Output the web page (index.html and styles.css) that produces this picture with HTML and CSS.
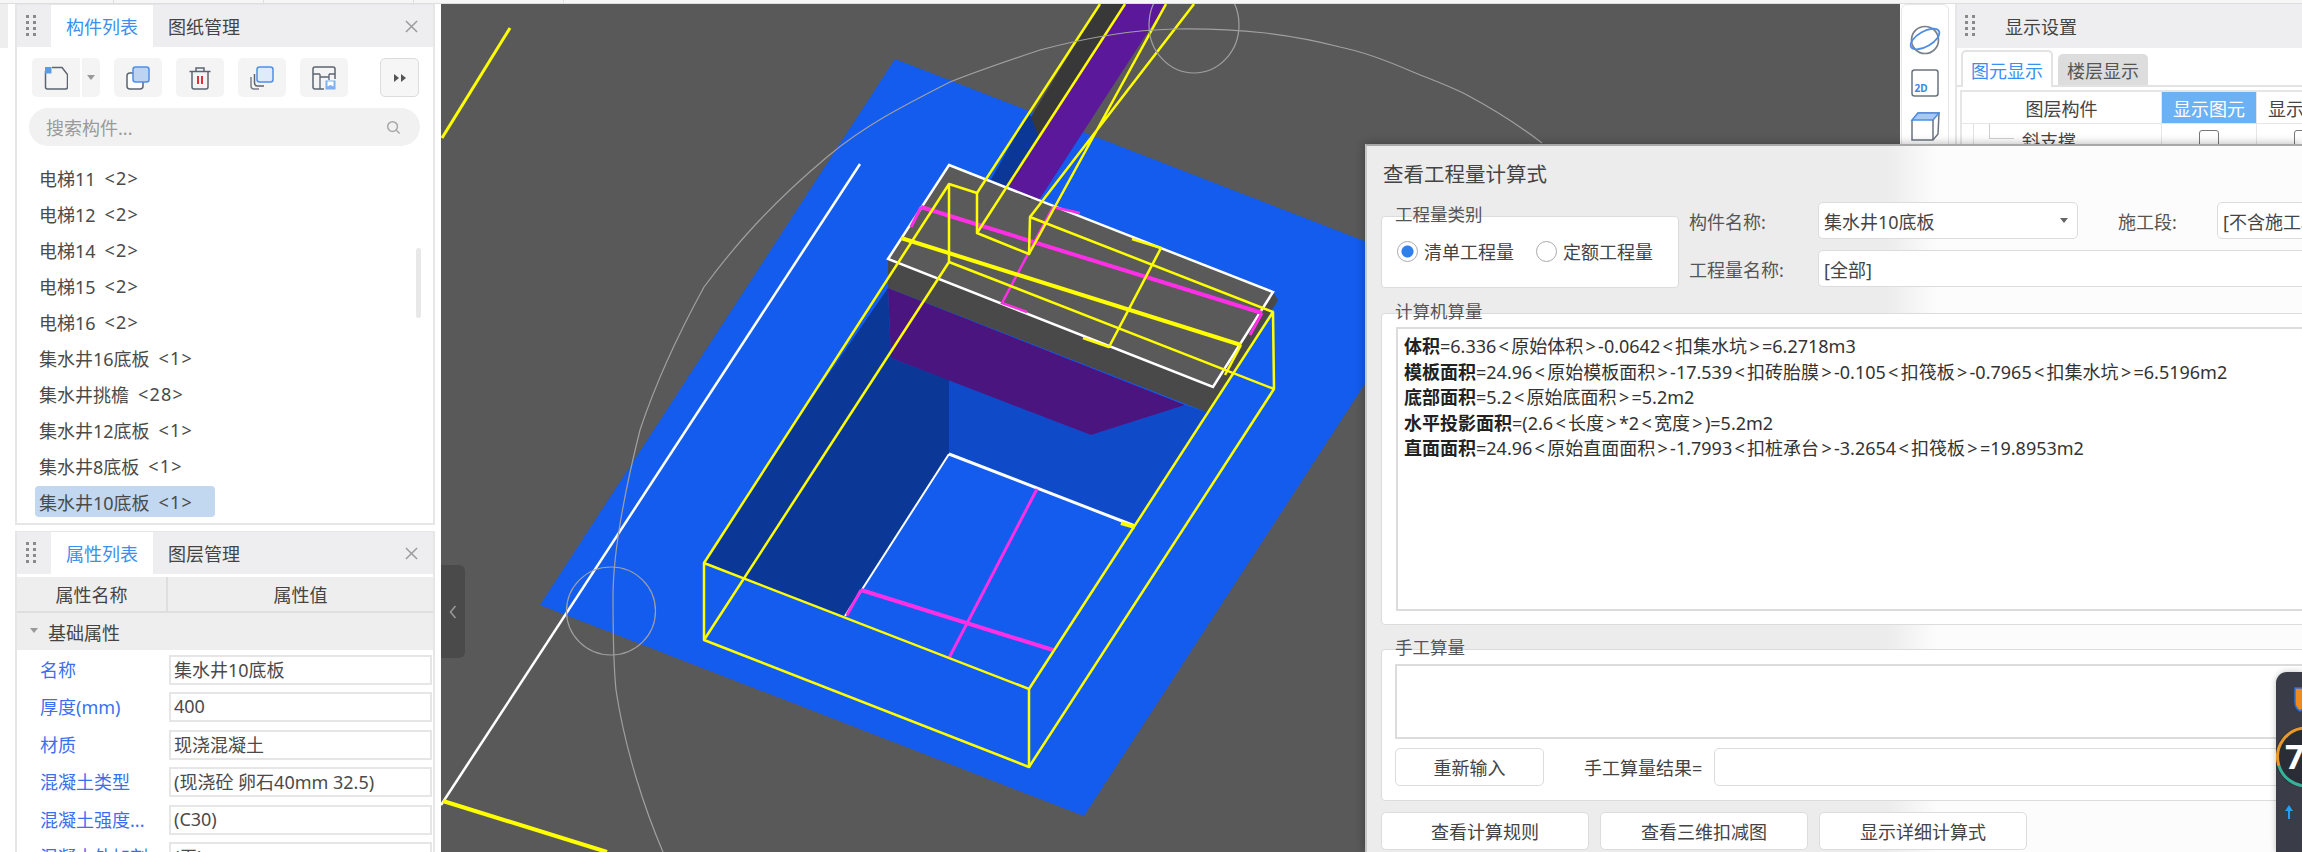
FILE: index.html
```html
<!DOCTYPE html>
<html lang="zh">
<head>
<meta charset="utf-8">
<title>查看工程量计算式</title>
<link rel="stylesheet" href="styles.css">
</head>
<body>
<div class="app">
  <div class="topstrip"><span></span><span></span><span></span><span></span></div>
  <div class="main">
    <div class="rail"><div class="rail-block"></div></div>
    <aside class="side">
      <section class="panel panel-list">
        <header class="phead">
          <svg class="grip" viewBox="0 0 10 22"><g fill="#8a8a8a"><rect x="0" y="0" width="3" height="3"/><rect x="7" y="0" width="3" height="3"/><rect x="0" y="6" width="3" height="3"/><rect x="7" y="6" width="3" height="3"/><rect x="0" y="12" width="3" height="3"/><rect x="7" y="12" width="3" height="3"/><rect x="0" y="18" width="3" height="3"/><rect x="7" y="18" width="3" height="3"/></g></svg>
          <div class="tab tab-on">构件列表</div>
          <div class="tab">图纸管理</div>
          <svg class="close" viewBox="0 0 14 14"><path d="M1 1l12 12M13 1L1 13" stroke="#9a9a9a" stroke-width="1.6" fill="none"/></svg>
        </header>
        <div class="tools">
          <div class="tbtn tbtn-new">
            <svg viewBox="0 0 24 24" class="ic"><path d="M1.500 5V21a2 2 0 0 0 2 2H21.500a2 2 0 0 0 2-2V8.500L18 1.500H8" fill="none" stroke="#5c6470" stroke-width="1.500"/><rect x="1" y="1" width="6.500" height="6.500" fill="#5a9bec"/></svg>
          </div>
          <div class="tbtn tbtn-arrow"><i class="caret"></i></div>
          <div class="tbtn">
            <svg viewBox="0 0 24 24" class="ic"><rect x="1" y="7" width="16" height="16" rx="3" fill="#fff" stroke="#5c6470" stroke-width="1.500"/><rect x="7" y="1" width="16" height="15" rx="2.500" fill="#bcd3f2" stroke="#4f8fe6" stroke-width="1.500"/></svg>
          </div>
          <div class="tbtn">
            <svg viewBox="0 0 24 24" class="ic"><path d="M4 6V21a2 2 0 0 0 2 2H18a2 2 0 0 0 2-2V6" fill="none" stroke="#5c6470" stroke-width="1.500"/><path d="M1.500 5.500H22.500M8 5V2h8v3" fill="none" stroke="#5c6470" stroke-width="1.500"/><path d="M10 10v8M14 10v8" stroke="#e0303a" stroke-width="2"/></svg>
          </div>
          <div class="tbtn">
            <svg viewBox="0 0 24 24" class="ic"><path d="M1 11V20a3 3 0 0 0 3 3H9" fill="none" stroke="#7a8088" stroke-width="1.500"/><path d="M4.500 8V17a3 3 0 0 0 3 3H14" fill="none" stroke="#5c6470" stroke-width="1.500"/><rect x="7" y="1" width="16" height="15" rx="2.500" fill="#dfeafa" stroke="#4f8fe6" stroke-width="1.500"/></svg>
          </div>
          <div class="tbtn">
            <svg viewBox="0 0 24 24" class="ic"><path d="M12 23H3a2 2 0 0 1-2-2V3a2 2 0 0 1 2-2H21a2 2 0 0 1 2 2V13" fill="none" stroke="#5c6470" stroke-width="1.500"/><path d="M1 8H8M8 8V14M8 11H17M17 8V14M17 8H23M8 14V23" fill="none" stroke="#5c6470" stroke-width="1.300"/><rect x="13.500" y="14.500" width="10" height="9" fill="#7fb0ee"/><path d="M15.500 15.500h6v5l-3-1.500-3 1.500z" fill="#fff"/></svg>
          </div>
          <div class="tbtn tbtn-more">
            <svg viewBox="0 0 12 8" class="ic-more"><path d="M0 0l5 4-5 4zM7 0l5 4-5 4z" fill="#555"/></svg>
          </div>
        </div>
        <div class="search">
          <span>搜索构件...</span>
          <svg viewBox="0 0 16 16" class="ic-search"><circle cx="7" cy="7" r="5.200" fill="none" stroke="#a8a8a8" stroke-width="1.600"/><path d="M11 11l3.500 3.500" stroke="#a8a8a8" stroke-width="1.600"/></svg>
        </div>
        <ul class="items">
          <li>电梯11<span class="n">&lt;2&gt;</span></li>
          <li>电梯12<span class="n">&lt;2&gt;</span></li>
          <li>电梯14<span class="n">&lt;2&gt;</span></li>
          <li>电梯15<span class="n">&lt;2&gt;</span></li>
          <li>电梯16<span class="n">&lt;2&gt;</span></li>
          <li>集水井16底板<span class="n">&lt;1&gt;</span></li>
          <li>集水井挑檐<span class="n">&lt;28&gt;</span></li>
          <li>集水井12底板<span class="n">&lt;1&gt;</span></li>
          <li>集水井8底板<span class="n">&lt;1&gt;</span></li>
          <li class="sel">集水井10底板<span class="n">&lt;1&gt;</span></li>
        </ul>
        <div class="sbar"></div>
      </section>
      <section class="panel panel-props">
        <header class="phead">
          <svg class="grip" viewBox="0 0 10 22"><g fill="#8a8a8a"><rect x="0" y="0" width="3" height="3"/><rect x="7" y="0" width="3" height="3"/><rect x="0" y="6" width="3" height="3"/><rect x="7" y="6" width="3" height="3"/><rect x="0" y="12" width="3" height="3"/><rect x="7" y="12" width="3" height="3"/><rect x="0" y="18" width="3" height="3"/><rect x="7" y="18" width="3" height="3"/></g></svg>
          <div class="tab tab-on">属性列表</div>
          <div class="tab">图层管理</div>
          <svg class="close" viewBox="0 0 14 14"><path d="M1 1l12 12M13 1L1 13" stroke="#9a9a9a" stroke-width="1.6" fill="none"/></svg>
        </header>
        <div class="thead"><div>属性名称</div><div>属性值</div></div>
        <div class="tgroup"><i class="caret caret-sm"></i>基础属性</div>
        <div class="prow"><label>名称</label><div class="pval">集水井10底板</div></div>
        <div class="prow"><label>厚度(mm)</label><div class="pval">400</div></div>
        <div class="prow"><label>材质</label><div class="pval">现浇混凝土</div></div>
        <div class="prow"><label>混凝土类型</label><div class="pval">(现浇砼 卵石40mm 32.5)</div></div>
        <div class="prow"><label>混凝土强度...</label><div class="pval">(C30)</div></div>
        <div class="prow"><label>混凝土外加剂</label><div class="pval">(无)</div></div>
      </section>
    </aside>

    <div class="canvas">
      <svg class="scene" viewBox="441 4 1459 848" preserveAspectRatio="none">
        <polygon points="895,59 1439,270 1084,816 540,605" fill="#135cee"/>
        <polygon points="888,288 891,358 949,380 949,454 845,616 704,563 790,430" fill="#0b3896"/>
        <polygon points="949,380 1091,435 1185,405 1209,413 1135,526 949,454" fill="#0f4bc9"/>
        <polygon points="888,288 1185,405 1091,435 891,358" fill="#4b1580"/>
        <polygon points="888,259 1213,387 1273,292 1278,300 1209,413 888,288" fill="#494949"/>
        <polygon points="949,165 1273,292 1213,387 888,259" fill="#5a5a5a"/>
        <polygon points="1100,4 1125,4 1030,200 1006,183 1029,120" fill="#383838"/>
        <polygon points="1029,112 1040,140 1006,187 989,183" fill="#0b3896"/>
        <polygon points="1125,4 1166,4 1039,200 1009,187" fill="#5b189a"/>

        <g fill="none" stroke="#ffffff">
          <path d="M860 164L441 805" stroke-width="2.500"/>
          <path d="M949 165L1273 292L1213 387L888 259Z" stroke-width="2.500"/>
          <path d="M949 454L1135 526" stroke-width="3"/>
          <path d="M949 454L845 616" stroke-width="2"/>
        </g>
        <g fill="none" stroke="#ff2fe6">
          <path d="M921 207L1262 313" stroke-width="4"/>
          <path d="M921 207L911 227M1262 313L1250 335" stroke-width="3"/>
          <path d="M1053 207L1002 303L1027 312M1053 207L1080 213" stroke-width="2.500"/>
          <path d="M861 590L1053 650" stroke-width="4"/>
          <path d="M861 590L847 615" stroke-width="3"/>
          <path d="M1037 489L949 658" stroke-width="3"/>
        </g>
        <g fill="none" stroke="#ffff00" stroke-width="2.500" stroke-linejoin="round">
          <path d="M510 28L442 138" stroke-width="3"/>
          <path d="M443 801L607 852" stroke-width="4"/>
          <path d="M704 563L1029 689L1029 767L704 640Z"/>
          <path d="M704 563L949 184L949 262L704 640"/>
          <path d="M1029 689L1273 312L1274 389L1029 767"/>
          <path d="M949 184L977 193L977 233L1029 254L1030 217L1273 312"/>
          <path d="M949 262L1274 389"/>
          <path d="M977 193L1100 4M977 233L1125 4M1029 254L1166 4M1030 217L1194 4"/>
          <path d="M901 238L1241 345" stroke-width="4"/>
          <path d="M1132 239L1161 248L1109 347L1083 338"/>
          <path d="M1241 345L1225 375"/>
          <path d="M1121 523L1135 527" stroke-width="4"/>
        </g>
        <g fill="none" stroke="#a0a0a0" stroke-width="1.200">
          <path d="M1542 143C1520 126 1495 110 1467 95C1450 86 1430 79 1413 72C1390 62 1365 52 1340 47C1290 34 1240 28 1174 29C1130 30 1085 38 1040 50C1010 60 980 70 950 82C905 105 865 125 827 157C770 205 735 245 704 287C675 340 655 385 640 430C625 490 613 550 613 597C613 630 613 660 616 690C625 750 645 810 663 852"/>
          <ellipse cx="1194" cy="25" rx="45" ry="48"/>
          <ellipse cx="611" cy="611" rx="44.500" ry="44"/>
        </g>
      </svg>
      <div class="handle">
        <svg viewBox="0 0 8 14" class="handle-ic"><path d="M6.500 1L1.500 7l5 6" fill="none" stroke="#9a9a9a" stroke-width="1.500"/></svg>
      </div>
    </div>

    <div class="vtools">
      <svg viewBox="0 0 32 32" class="vic"><circle cx="16" cy="16" r="13.500" fill="none" stroke="#7a8088" stroke-width="1.700"/><ellipse cx="16" cy="15" rx="16" ry="7.500" transform="rotate(-30 16 15)" fill="none" stroke="#4d8ee6" stroke-width="1.800"/></svg>
      <svg viewBox="0 0 28 28" class="vic vic-2d"><rect x="1" y="1" width="26" height="26" rx="2.500" fill="#fff" stroke="#6b7480" stroke-width="1.500"/><text x="3.500" y="23" class="t2d">2D</text></svg>
      <svg viewBox="0 0 30 30" class="vic vic-cube"><path d="M2 10L8 2H29L28 23L23 29H2Z" fill="#fff" stroke="#6b7480" stroke-width="1.500"/><path d="M2 9H23L29 2H8Z" fill="#a9c8f3" stroke="#4d8ee6" stroke-width="1.500"/><path d="M23 9V29" stroke="#6b7480" stroke-width="1.500"/></svg>
    </div>

    <aside class="rpanel">
      <header class="phead rhead">
        <svg class="grip" viewBox="0 0 10 22"><g fill="#8a8a8a"><rect x="0" y="0" width="3" height="3"/><rect x="7" y="0" width="3" height="3"/><rect x="0" y="6" width="3" height="3"/><rect x="7" y="6" width="3" height="3"/><rect x="0" y="12" width="3" height="3"/><rect x="7" y="12" width="3" height="3"/><rect x="0" y="18" width="3" height="3"/><rect x="7" y="18" width="3" height="3"/></g></svg>
        <div class="rtitle">显示设置</div>
      </header>
      <div class="rtabs">
        <div class="rtab rtab-on">图元显示</div>
        <div class="rtab">楼层显示</div>
      </div>
      <div class="rtable">
        <div class="rcell rc-1">图层构件</div>
        <div class="rcell rc-2 rc-hi">显示图元</div>
        <div class="rcell rc-3">显示名称</div>
        <div class="rcell rc-1 rc-tree"><i class="tree-a"></i><i class="tree-b"></i>斜支撑</div>
        <div class="rcell rc-2"><i class="cb"></i></div>
        <div class="rcell rc-3"><i class="cb"></i></div>
      </div>
    </aside>
  </div>
</div>

<div class="dialog">
  <div class="dlg-inner">
    <div class="dlg-title">查看工程量计算式</div>
    <div class="dlg-top">
      <div class="group g-kind">
        <div class="legend">工程量类别</div>
        <div class="radios">
          <span class="radio radio-on"></span><span class="rlabel">清单工程量</span>
          <span class="radio"></span><span class="rlabel">定额工程量</span>
        </div>
      </div>
      <div class="form">
        <div class="flabel">构件名称:</div>
        <div class="field">集水井10底板<i class="caret caret-dark"></i></div>
        <div class="flabel flabel-2">施工段:</div>
        <div class="field">[不含施工段]</div>
        <div class="flabel">工程量名称:</div>
        <div class="field field-wide">[全部]</div>
      </div>
    </div>
    <div class="group g-calc">
      <div class="legend">计算机算量</div>
      <div class="calc">
        <div><b>体积</b>=6.336<s>&lt;</s>原始体积<s>&gt;</s>-0.0642<s>&lt;</s>扣集水坑<s>&gt;</s>=6.2718m3</div>
        <div><b>模板面积</b>=24.96<s>&lt;</s>原始模板面积<s>&gt;</s>-17.539<s>&lt;</s>扣砖胎膜<s>&gt;</s>-0.105<s>&lt;</s>扣筏板<s>&gt;</s>-0.7965<s>&lt;</s>扣集水坑<s>&gt;</s>=6.5196m2</div>
        <div><b>底部面积</b>=5.2<s>&lt;</s>原始底面积<s>&gt;</s>=5.2m2</div>
        <div><b>水平投影面积</b>=(2.6<s>&lt;</s>长度<s>&gt;</s>*2<s>&lt;</s>宽度<s>&gt;</s>)=5.2m2</div>
        <div><b>直面面积</b>=24.96<s>&lt;</s>原始直面面积<s>&gt;</s>-1.7993<s>&lt;</s>扣桩承台<s>&gt;</s>-3.2654<s>&lt;</s>扣筏板<s>&gt;</s>=19.8953m2</div>
      </div>
    </div>
    <div class="group g-manual">
      <div class="legend">手工算量</div>
      <div class="manual-box"></div>
      <div class="manual-row">
        <div class="btn btn-re">重新输入</div>
        <div class="mlabel">手工算量结果=</div>
        <div class="minput"></div>
      </div>
    </div>
    <div class="dlg-btns">
      <div class="btn">查看计算规则</div>
      <div class="btn">查看三维扣减图</div>
      <div class="btn">显示详细计算式</div>
    </div>
  </div>
</div>

<div class="widget">
  <svg viewBox="0 0 26 180" class="widget-svg">
    <path d="M19 16H30V30Q30 36 24 39Q19 36 19 30Z" fill="#f08a1d" stroke="#2f6fe0" stroke-width="1.500"/>
    <circle cx="30" cy="85" r="31" fill="#2b2d36"/>
    <path d="M30 56A29 29 0 0 0 3 94" fill="none" stroke="#e79a2a" stroke-width="3"/>
    <path d="M3 94A29 29 0 0 0 30 114" fill="none" stroke="#35b39a" stroke-width="3"/>
    <text x="9" y="97" class="w7">7</text>
    <path d="M13 133l-4 6h3v8h2v-8h3z" fill="#1fa0ff"/>
  </svg>
</div>
</body>
</html>
```

FILE: styles.css
```css
* { box-sizing: border-box; }
html, body { margin: 0; padding: 0; width: 2302px; height: 852px; overflow: hidden; background: #fff; }
body { font-family: "Noto Sans", "Noto Sans CJK SC", sans-serif; font-size: 18px; color: #444; position: relative; }
.app { display: flex; flex-direction: column; width: 2302px; height: 852px; }
.topstrip { height: 4px; display: flex; background: #f6f6f6; border-bottom: 1px solid #dedede; flex: none; }
.topstrip span { width: 150px; border-right: 1px solid #dedede; }
.topstrip span:first-child { width: 114px; }
.main { flex: 1; display: flex; min-height: 0; }

.rail { width: 8px; flex: none; }
.rail-block { height: 44px; background: #eeeeee; }
.side { width: 420px; margin-left: 7px; margin-right: 6px; flex: none; display: flex; flex-direction: column; gap: 6px; }
.panel { border: 2px solid #e6e6e6; border-top-width: 1px; background: #fff; position: relative; overflow: hidden; }
.panel-list { height: 521px; }
.panel-props { flex: 1; border-bottom: 0; }
.phead { height: 42px; background: #eeeef0; display: flex; align-items: stretch; position: relative; }
.grip { width: 10px; height: 22px; margin: 10px 15px 0 9px; flex: none; }
.tab { width: 102px; display: flex; align-items: center; justify-content: center; color: #444; }
.tab-on { background: #fff; color: #3a8ff0; }
.close { position: absolute; right: 15px; top: 15px; width: 13px; height: 13px; }

.tools { display: flex; padding: 11px 0 0 15px; height: 50px; }
.tbtn { width: 48px; height: 39px; background: #f4f4f4; border-radius: 5px; margin-right: 14px; display: flex; align-items: center; justify-content: center; flex: none; }
.tbtn-new { width: 48px; margin-right: 2px; border-radius: 5px 0 0 5px; }
.tbtn-arrow { width: 18px; border-radius: 0 5px 5px 0; }
.tbtn-more { width: 39px; margin: 0 0 0 18px; background: #f6f6f6; border: 1.500px solid #dcdcdc; }
.ic { width: 24px; height: 24px; }
.ic-more { width: 12px; height: 8px; }
.caret { display: block; width: 0; height: 0; border-left: 4.500px solid transparent; border-right: 4.500px solid transparent; border-top: 5px solid #999; }
.search { margin: 11px 0 0 12px; width: 391px; height: 38px; border-radius: 19px; background: #f1f1f1; display: flex; align-items: center; justify-content: space-between; padding: 0 19px 0 17px; color: #9a9a9a; font-size: 18px; }
.ic-search { width: 15px; height: 15px; }
.items { list-style: none; margin: 14px 0 0 18px; padding: 0; width: 180px; }
.items li { height: 36px; display: flex; align-items: center; padding-left: 4px; white-space: nowrap; font-size: 18px; color: #4a4a4a; }
.items li.sel { height: 31px; margin-top: 2px; background: #c1d8f0; border-radius: 4px; }
.n { margin-left: 9px; letter-spacing: 1.200px; }
.sbar { position: absolute; left: 399px; top: 243px; width: 5px; height: 70px; background: #e8e8e8; border-radius: 3px; }

.thead { margin-top: 3px; height: 36px; background: #eeeeee; display: grid; grid-template-columns: 151px 1fr; border-bottom: 2px solid #dedede; }
.thead div { display: flex; align-items: center; justify-content: center; }
.thead div:first-child { border-right: 2px solid #dedede; }
.tgroup { height: 37px; background: #eeeeee; display: flex; align-items: center; padding-left: 13px; gap: 10px; }
.caret-sm { margin-top: -2px; }
.prow { display: grid; grid-template-columns: 152px 1fr; height: 37.500px; align-items: center; padding-right: 1px; }
.tgroup + .prow { margin-top: 1px; }
.prow label { padding-left: 23px; padding-bottom: 2px; color: #3c6ff0; white-space: nowrap; }
.pval { height: 30px; border: 2px solid #e6e6e6; padding: 0 0 2px 3px; display: flex; align-items: center; color: #4a4a4a; white-space: nowrap; }

.canvas { width: 1459px; flex: none; background: #595959; position: relative; overflow: hidden; }
.scene { display: block; width: 1459px; height: 848px; }
.handle { position: absolute; left: 0; top: 561px; width: 24px; height: 93px; background: #4a4a4a; border-radius: 0 6px 6px 0; display: flex; align-items: center; justify-content: center; }
.handle-ic { width: 8px; height: 14px; }

.vtools { width: 48px; margin-left: 1px; flex: none; background: #fff; border: 1px solid #e6e6e6; border-radius: 6px 6px 0 0; display: flex; flex-direction: column; align-items: center; padding-top: 19px; }
.vic { width: 32px; height: 32px; }
.vic-2d { width: 28px; height: 28px; margin-top: 13px; }
.vic-cube { width: 30px; height: 30px; margin-top: 14px; }
.t2d { font: 700 10px "Noto Sans", sans-serif; fill: #3a86ea; }

.rpanel { width: 347px; margin-left: 6px; flex: none; background: #fff; overflow: hidden; border-left: 2px solid #e6e6e6; }
.rhead { height: 44px; }
.rhead .grip { margin: 11px 14px 0 8px; }
.rtitle { display: flex; align-items: center; margin-left: 16px; color: #444; }
.rtabs { display: flex; height: 39px; padding: 4px 0 0 4px; gap: 5px; border-bottom: 2px solid #e3e3e3; align-items: flex-end; }
.rtab { width: 90px; height: 31px; background: #ddd; border-radius: 5px 5px 0 0; display: flex; align-items: center; justify-content: center; color: #555; }
.rtab-on { width: 92px; height: 37px; margin-bottom: -2px; background: #fff; border: 2px solid #e3e3e3; border-bottom: 0; color: #3a8ff0; }
.rtable { margin: 3px 0 0 3px; display: grid; grid-template-columns: 200px 95px 95px; grid-auto-rows: 32px; border-left: 2px solid #e6e6e6; border-top: 2px solid #e6e6e6; }
.rcell { display: flex; align-items: center; justify-content: center; border-right: 1px solid #e6e6e6; border-bottom: 1px solid #e6e6e6; white-space: nowrap; color: #444; position: relative; }
.rc-hi { background: #6db1f5; color: #fff; }
.rc-tree { justify-content: flex-start; padding-left: 60px; }
.tree-a { position: absolute; left: 11px; top: 0; bottom: 0; border-left: 1px solid #e3e3e3; }
.tree-b { position: absolute; left: 27px; top: 0; width: 25px; height: 15px; border-left: 1px solid #d0d0d0; border-bottom: 1px solid #d0d0d0; }
.cb { width: 20px; height: 20px; border: 1.500px solid #777; border-radius: 3px; background: #fff; }

.dialog { position: absolute; left: 1365px; top: 144px; width: 937px; height: 708px; overflow: hidden; background: linear-gradient(90deg, #ececec 0, #ececec 520px, #fcfcfc 570px); border-top: 2px solid #a8a8a8; border-left: 2px solid #c8c8c8; box-shadow: 0 0 9px rgba(0, 0, 0, .3); }
.dlg-inner { width: 1100px; padding-left: 14px; }
.dlg-title { height: 56px; display: flex; align-items: center; font-size: 20.500px; color: #444; padding-left: 2px; padding-bottom: 3px; }
.group { position: relative; background: #fff; border: 1.500px solid #dcdcdc; border-radius: 4px; }
.legend { position: absolute; left: 13px; top: -16px; line-height: 26px; color: #555; white-space: nowrap; font-size: 17.500px; }
.dlg-top { display: flex; align-items: flex-start; }
.g-kind { width: 298px; height: 72px; margin-top: 14px; flex: none; }
.radios { display: flex; align-items: center; padding: 21px 0 0 15px; }
.radio { width: 21px; height: 21px; border-radius: 50%; border: 1.500px solid #aaa; background: #fff; flex: none; }
.radio-on { background: radial-gradient(circle, #2f80ed 0 5.500px, #fff 6.500px); }
.rlabel { margin: 0 22px 0 6px; color: #444; white-space: nowrap; }
.form { margin-left: 10px; display: grid; grid-template-columns: 129px 260px 139px 300px; grid-template-rows: 37px 37px; row-gap: 11px; align-items: center; }
.flabel { color: #555; }
.flabel-2 { padding-left: 40px; }
.field { height: 100%; border: 1.500px solid #dcdcdc; border-radius: 5px; background: #fff; display: flex; align-items: center; justify-content: space-between; padding: 0 9px 0 5px; color: #444; white-space: nowrap; overflow: hidden; }
.field-wide { grid-column: 2 / 5; }
.caret-dark { border-top-color: #666; }
.g-calc { margin-top: 25px; height: 312px; padding: 13px 0 0 14px; }
.calc { height: 284px; border: 2px solid #dcdcdc; padding: 5px 0 0 6px; font-size: 18px; line-height: 25.600px; color: #333; white-space: nowrap; }
.calc b { color: #222; }
.calc s { text-decoration: none; padding: 0 2.300px; }
.g-manual { margin-top: 24px; height: 152px; padding: 14px 0 0 13px; }
.manual-box { height: 75px; border: 2px solid #dcdcdc; }
.manual-row { display: flex; align-items: center; margin-top: 9px; }
.btn { height: 38px; border: 1.500px solid #dcdcdc; border-radius: 5px; background: #fff; display: flex; align-items: center; justify-content: center; color: #444; font-size: 18px; }
.btn-re { width: 149px; flex: none; }
.mlabel { margin-left: 40px; width: 130px; color: #444; font-size: 18px; white-space: nowrap; flex: none; }
.minput { flex: 1; height: 38px; border: 1.500px solid #dcdcdc; border-radius: 5px; }
.dlg-btns { display: grid; grid-template-columns: repeat(3, 208px); gap: 11px; margin-top: 11px; }

.widget { position: absolute; left: 2276px; top: 672px; width: 26px; height: 180px; background: #3a3d48; border-radius: 11px 0 0 0; overflow: hidden; box-shadow: 0 0 6px rgba(0, 0, 0, .25); }
.widget-svg { display: block; width: 26px; height: 180px; }
.w7 { font: 700 34px "Noto Sans", sans-serif; fill: #fff; }
```
